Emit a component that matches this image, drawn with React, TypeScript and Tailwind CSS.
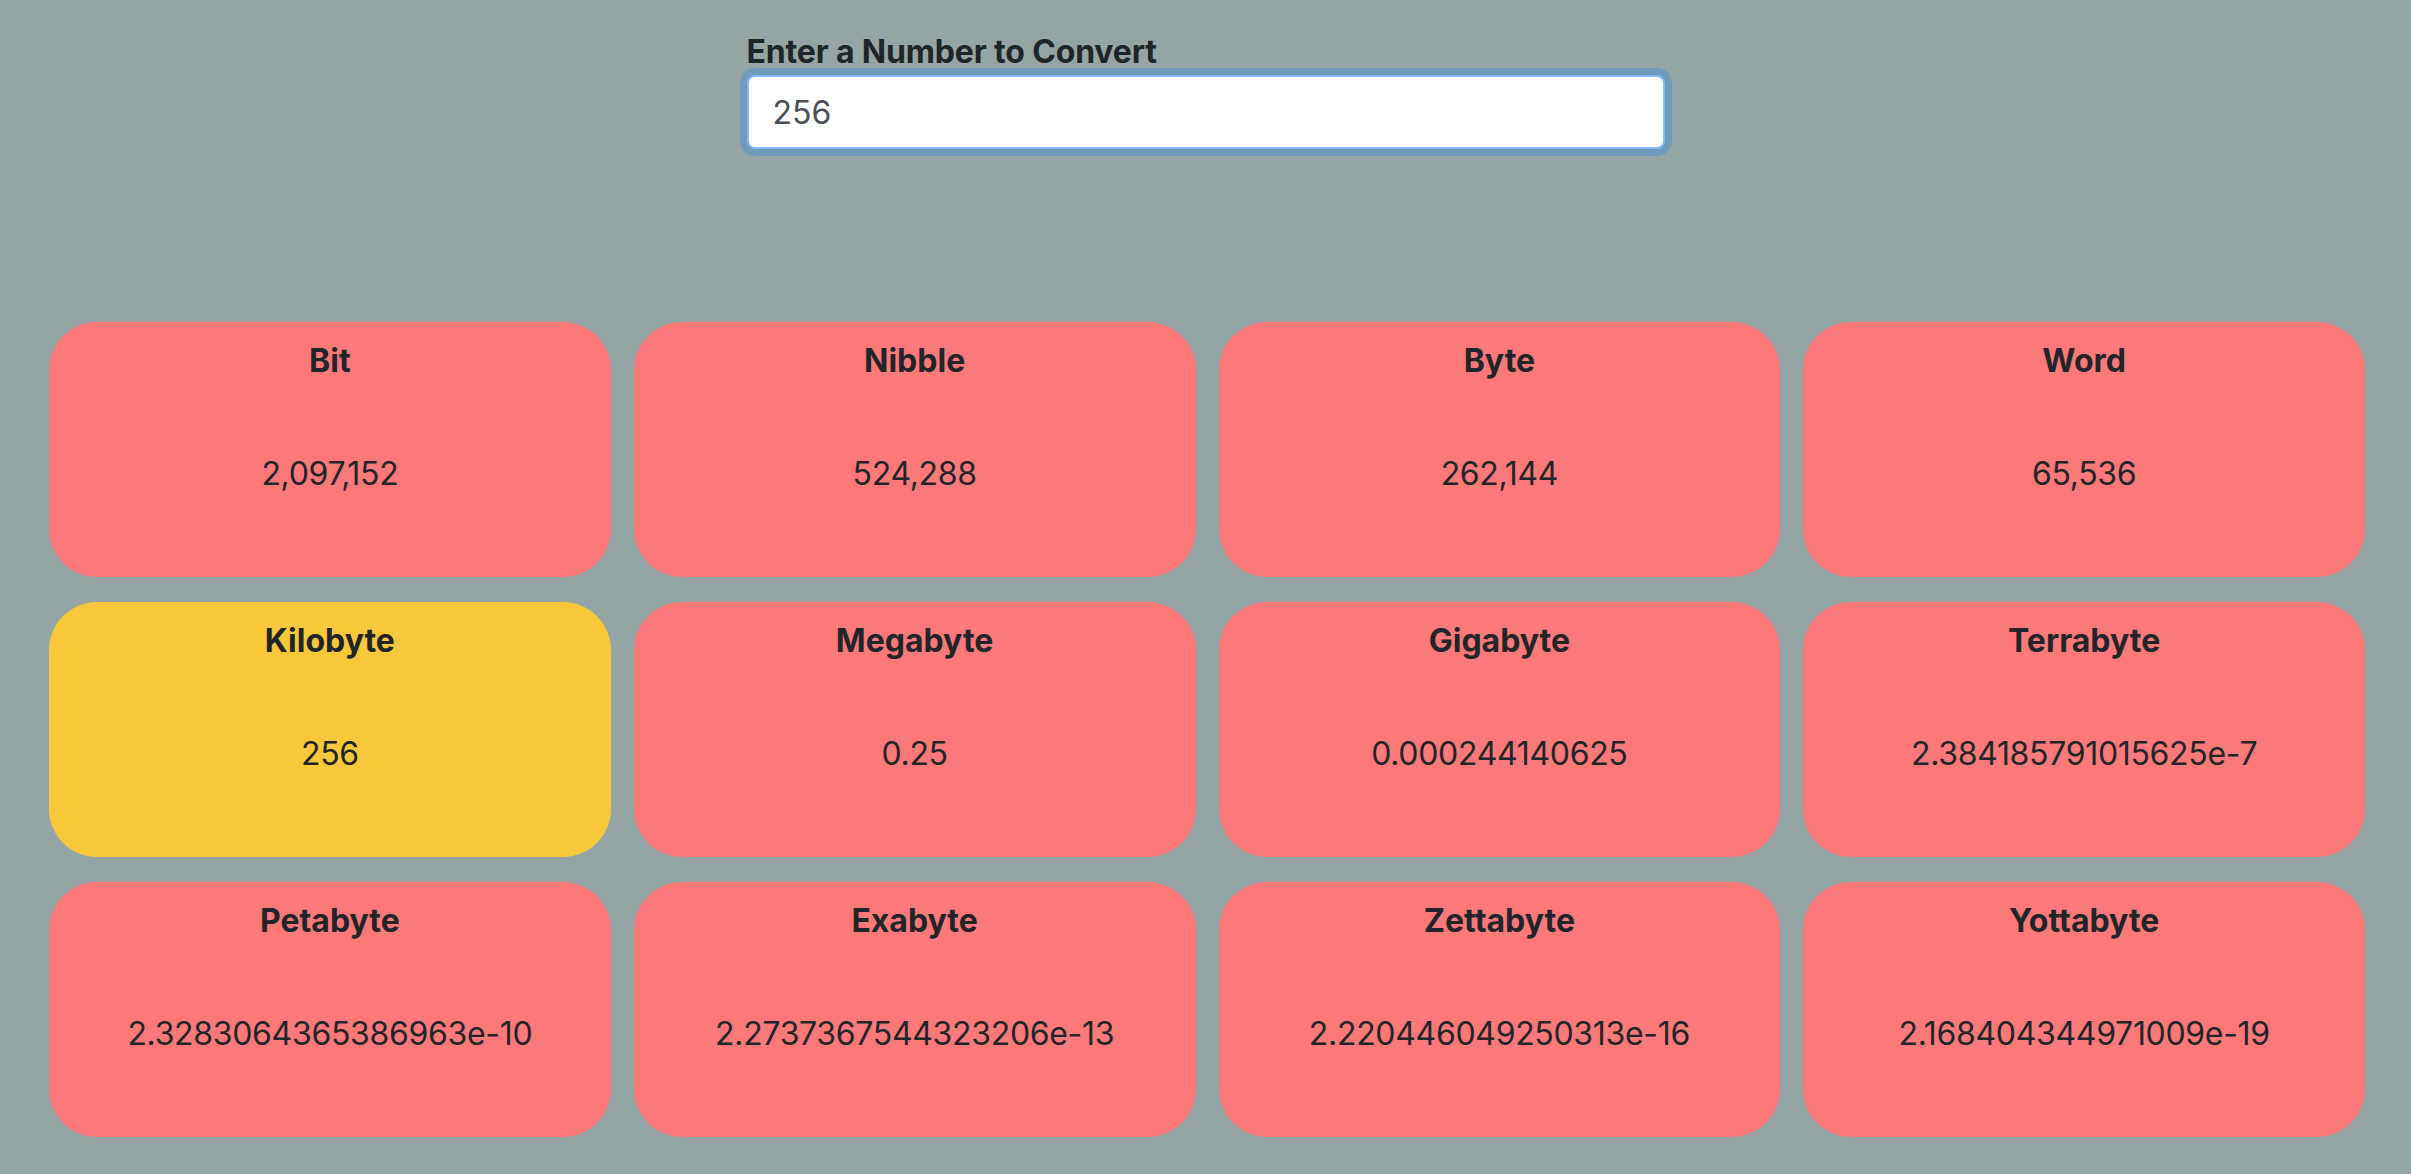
import React from "react";

const units = [
  { name: "Bit", value: "2,097,152" },
  { name: "Nibble", value: "524,288" },
  { name: "Byte", value: "262,144" },
  { name: "Word", value: "65,536" },
  { name: "Kilobyte", value: "256", active: true },
  { name: "Megabyte", value: "0.25" },
  { name: "Gigabyte", value: "0.000244140625" },
  { name: "Terrabyte", value: "2.384185791015625e-7" },
  { name: "Petabyte", value: "2.3283064365386963e-10" },
  { name: "Exabyte", value: "2.2737367544323206e-13" },
  { name: "Zettabyte", value: "2.220446049250313e-16" },
  { name: "Yottabyte", value: "2.168404344971009e-19" },
];

const App = () => {
  return (
    <div className="min-h-screen w-full bg-[#95a5a6] font-['Inter',sans-serif] text-[#212529]">
      <div className="w-[918px] mx-auto pt-[32px]">
        <label className="block text-[32px] leading-[40px] font-bold tracking-[-0.005em] mb-[3px]">
          Enter a Number to Convert
        </label>
        <input
          type="text"
          defaultValue="256"
          className="block w-full h-[74px] px-[24px] bg-white text-[32px] text-[#495057] border-2 border-[#80bdff] rounded-[8px] outline-none shadow-[0_0_0_7px_rgba(0,123,255,0.25)]"
        />
      </div>
      <div className="grid grid-cols-4 gap-x-[23px] gap-y-[25px] pl-[49px] pr-[46px] mt-[173px] pb-[39px]">
        {units.map((u) => (
          <div
            key={u.name}
            className={
              "h-[255px] rounded-[48px] flex flex-col items-center pt-[20px] " +
              (u.active ? "bg-[#f9c73a]" : "bg-[#fd7979]")
            }
          >
            <h5 className="text-[32px] leading-[38px] font-bold">{u.name}</h5>
            <p className="text-[32px] leading-[38px] tracking-[-0.01em] mt-[75px]">{u.value}</p>
          </div>
        ))}
      </div>
    </div>
  );
};

export default App;
